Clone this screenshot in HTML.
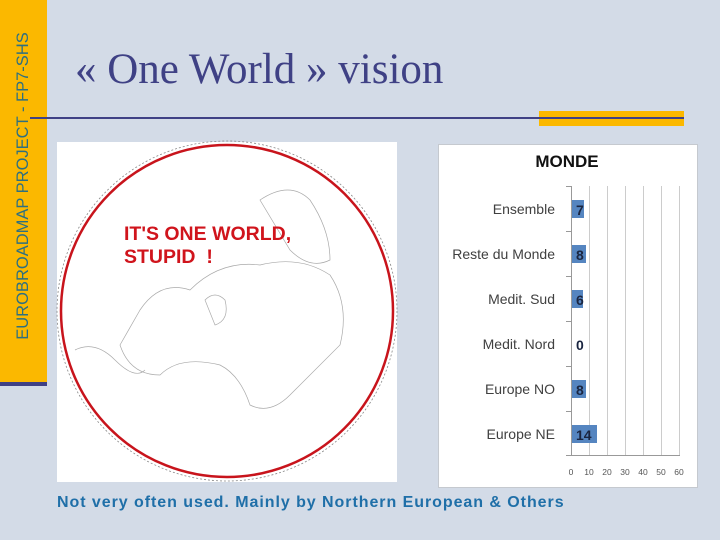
<!DOCTYPE html>
<html><head><meta charset="utf-8"><style>
body{margin:0;width:720px;height:540px;background:#d3dbe7;position:relative;overflow:hidden;font-family:"Liberation Sans",sans-serif}
.abs{position:absolute}
</style></head><body>
<div class="abs" style="left:0;top:0;width:47px;height:382px;background:#fbb800"></div>
<div class="abs" style="left:0;top:382px;width:47px;height:4px;background:#3f4185"></div>
<div class="abs" style="left:23px;top:186px;width:360px;height:20px;margin-left:-180px;margin-top:-10px;transform:rotate(-90deg);text-align:center;color:#2e6f80;font-size:16.5px;line-height:20px;white-space:nowrap">EUROBROADMAP PROJECT - FP7-SHS</div>
<div class="abs" style="left:75px;top:45px;font-family:'Liberation Serif',serif;font-size:43px;color:#3f4185;white-space:nowrap">« One World » vision</div>
<div class="abs" style="left:539px;top:111px;width:145px;height:15px;background:#fbb800"></div>
<div class="abs" style="left:30px;top:117px;width:654px;height:2px;background:#3f4185"></div>

<div class="abs" style="left:57px;top:142px;width:340px;height:340px;background:#fff"></div>
<svg class="abs" style="left:0;top:0" width="720" height="540">
<circle cx="227" cy="311" r="170" fill="none" stroke="#888" stroke-width="0.8" stroke-dasharray="2 2"/>
<circle cx="227" cy="311" r="166" fill="none" stroke="#c8141c" stroke-width="2.5"/>
<g fill="none" stroke="#aaa" stroke-width="0.7">
<path d="M140 310 q20-30 50-20 q30-30 70-25 q40-10 70 10 q20 30 10 70 q-20 20-50 50 q-20 20-40 10 q-10-30-30-40 q-40-10-60 10 q-30 0-40-30 z"/>
<path d="M260 200 q30-20 50 0 q20 30 20 60 q-20 10-40-10 z"/>
<path d="M205 300 q10-10 20 0 q5 20-10 25 z"/>
<path d="M75 350 q20-10 40 10 q20 20 30 10"/>
</g>
</svg>
<div class="abs" style="left:124px;top:223px;color:#d0141c;font-weight:bold;font-size:19.5px;line-height:23px">IT'S ONE WORLD,<br>STUPID&nbsp; !</div>

<div class="abs" style="left:57px;top:494px;color:#1f6fa8;font-weight:bold;font-size:16px;white-space:nowrap;letter-spacing:0.95px">Not very often used. Mainly by Northern European &amp; Others</div>

<div class="abs" style="left:438px;top:144px;width:258px;height:342px;background:#fff;border:1px solid #c5c9cf"></div>
<div class="abs" style="left:438px;top:152px;width:258px;text-align:center;font-weight:bold;font-size:17px;color:#111">MONDE</div>
<svg class="abs" style="left:0;top:0" width="720" height="540" font-family="Liberation Sans, sans-serif">
<g stroke="#ccc" stroke-width="1">
<line x1="589.5" y1="186" x2="589.5" y2="455"/><line x1="607.5" y1="186" x2="607.5" y2="455"/><line x1="625.5" y1="186" x2="625.5" y2="455"/><line x1="643.5" y1="186" x2="643.5" y2="455"/><line x1="661.5" y1="186" x2="661.5" y2="455"/><line x1="679.5" y1="186" x2="679.5" y2="455"/>
</g>
<g stroke="#999" stroke-width="1">
<line x1="571.5" y1="186" x2="571.5" y2="455"/><line x1="566" y1="455.5" x2="680" y2="455.5"/>
<line x1="566" y1="186.5" x2="572" y2="186.5"/><line x1="566" y1="231.5" x2="572" y2="231.5"/><line x1="566" y1="276.5" x2="572" y2="276.5"/><line x1="566" y1="321.5" x2="572" y2="321.5"/><line x1="566" y1="366.5" x2="572" y2="366.5"/><line x1="566" y1="411.5" x2="572" y2="411.5"/>
</g>
<g fill="#5585c0">
<rect x="572" y="200" width="12" height="18"/><rect x="572" y="245" width="14" height="18"/><rect x="572" y="290" width="11" height="18"/><rect x="572" y="380" width="14" height="18"/><rect x="572" y="425" width="25" height="18"/>
</g>
<g font-size="14" fill="#404040" text-anchor="end">
<text x="555" y="214">Ensemble</text><text x="555" y="259">Reste du Monde</text><text x="555" y="304">Medit. Sud</text><text x="555" y="349">Medit. Nord</text><text x="555" y="394">Europe NO</text><text x="555" y="439">Europe NE</text>
</g>
<g font-size="14" font-weight="bold" fill="#1a2540">
<text x="576" y="215">7</text><text x="576" y="260">8</text><text x="576" y="305">6</text><text x="576" y="350">0</text><text x="576" y="395">8</text><text x="576" y="440">14</text>
</g>
<g font-size="8.5" fill="#555" text-anchor="middle">
<text x="571" y="475">0</text><text x="589" y="475">10</text><text x="607" y="475">20</text><text x="625" y="475">30</text><text x="643" y="475">40</text><text x="661" y="475">50</text><text x="679" y="475">60</text>
</g>
</svg>
</body></html>
